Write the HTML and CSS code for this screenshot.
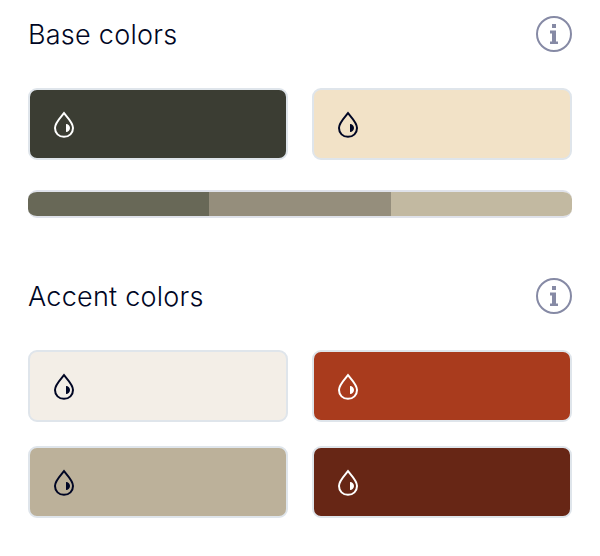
FILE: index.html
```html
<!DOCTYPE html>
<html lang="en">
<head>
  <meta charset="UTF-8">
  <meta name="viewport" content="width=device-width, initial-scale=1.0">
  <title>Site colors</title>
  <link rel="stylesheet" href="styles.css">
</head>
<body>
  <!-- Shared icons -->
  <svg class="icon-defs" width="0" height="0">
    <symbol id="drop" viewBox="0 0 22 28">
      <path d="M11 3.2C8.3 6.8 2 12.6 2 18C2 23.2 5.8 26.8 11 26.8S20 23.2 20 18C20 12.6 13.7 6.8 11 3.2Z" fill="none" stroke="currentColor" stroke-width="2"/>
      <path d="M13 14V22C15.4 22 17 20.2 17 18S15.4 14 13 14Z" fill="currentColor"/>
    </symbol>
    <symbol id="info" viewBox="0 0 36 36">
      <circle cx="18" cy="18" r="17" fill="none" stroke="currentColor" stroke-width="2"/>
      <path d="M16 8H20V12H16ZM14 14.5H20V25.5H22V28H14V25.5H16V17.5H14Z" fill="currentColor"/>
    </symbol>
  </svg>

  <div class="panel">
    <section class="section">
      <div class="section-header">
        <h2 class="title">Base colors</h2>
        <svg class="info-icon"><use href="#info"/></svg>
      </div>
      <div class="swatches">
        <div class="swatch dark-green"><svg class="drop-icon"><use href="#drop"/></svg></div>
        <div class="swatch cream"><svg class="drop-icon"><use href="#drop"/></svg></div>
      </div>
      <div class="shades">
        <div class="shade shade-1"></div>
        <div class="shade shade-2"></div>
        <div class="shade shade-3"></div>
      </div>
    </section>

    <section class="section">
      <div class="section-header">
        <h2 class="title">Accent colors</h2>
        <svg class="info-icon"><use href="#info"/></svg>
      </div>
      <div class="swatches">
        <div class="swatch ivory"><svg class="drop-icon"><use href="#drop"/></svg></div>
        <div class="swatch rust"><svg class="drop-icon"><use href="#drop"/></svg></div>
        <div class="swatch sand"><svg class="drop-icon"><use href="#drop"/></svg></div>
        <div class="swatch brown"><svg class="drop-icon"><use href="#drop"/></svg></div>
      </div>
    </section>
  </div>
</body>
</html>
```
FILE: styles.css
```css
* {
  box-sizing: border-box;
}

body {
  margin: 0;
  background-color: #fff;
  color: #000624;
  font-family: Inter, "Noto Sans", sans-serif;
}

.icon-defs {
  display: none;
}

.panel {
  padding: 16px 28px 0;
}

.section {
  margin-bottom: 60px;
}

.section:last-child {
  margin-bottom: 0;
}

.section-header {
  display: flex;
  justify-content: space-between;
  align-items: center;
  height: 36px;
  margin-bottom: 36px;
}

.title {
  margin: 0;
  padding-top: 2px;
  font-size: 27px;
  font-weight: 350;
  line-height: 36px;
  letter-spacing: 0.25px;
  white-space: nowrap;
}

.info-icon {
  width: 36px;
  height: 36px;
  color: #868aa5;
}

.swatches {
  display: grid;
  grid-template-columns: 1fr 1fr;
  gap: 24px;
}

.swatch {
  display: flex;
  align-items: center;
  height: 72px;
  padding-left: 23px;
  border: 2px solid #dfe5eb;
  border-radius: 9px;
}

.drop-icon {
  width: 22px;
  height: 28px;
}

.dark-green {
  background-color: #3b3d33;
  color: #fff;
}

.cream {
  background-color: #f2e2c7;
}

.ivory {
  background-color: #f3eee7;
}

.rust {
  background-color: #a93b1d;
  color: #fff;
}

.sand {
  background-color: #bcb19a;
}

.brown {
  background-color: #672615;
  color: #fff;
}

.shades {
  display: flex;
  height: 28px;
  margin-top: 30px;
  border: solid #dfe2ea;
  border-width: 2px 0;
  border-radius: 9px;
  overflow: hidden;
}

.shade {
  flex: 1;
}

.shade-1 {
  background-color: #686857;
}

.shade-2 {
  background-color: #958e7c;
}

.shade-3 {
  background-color: #c2b9a1;
}
```
